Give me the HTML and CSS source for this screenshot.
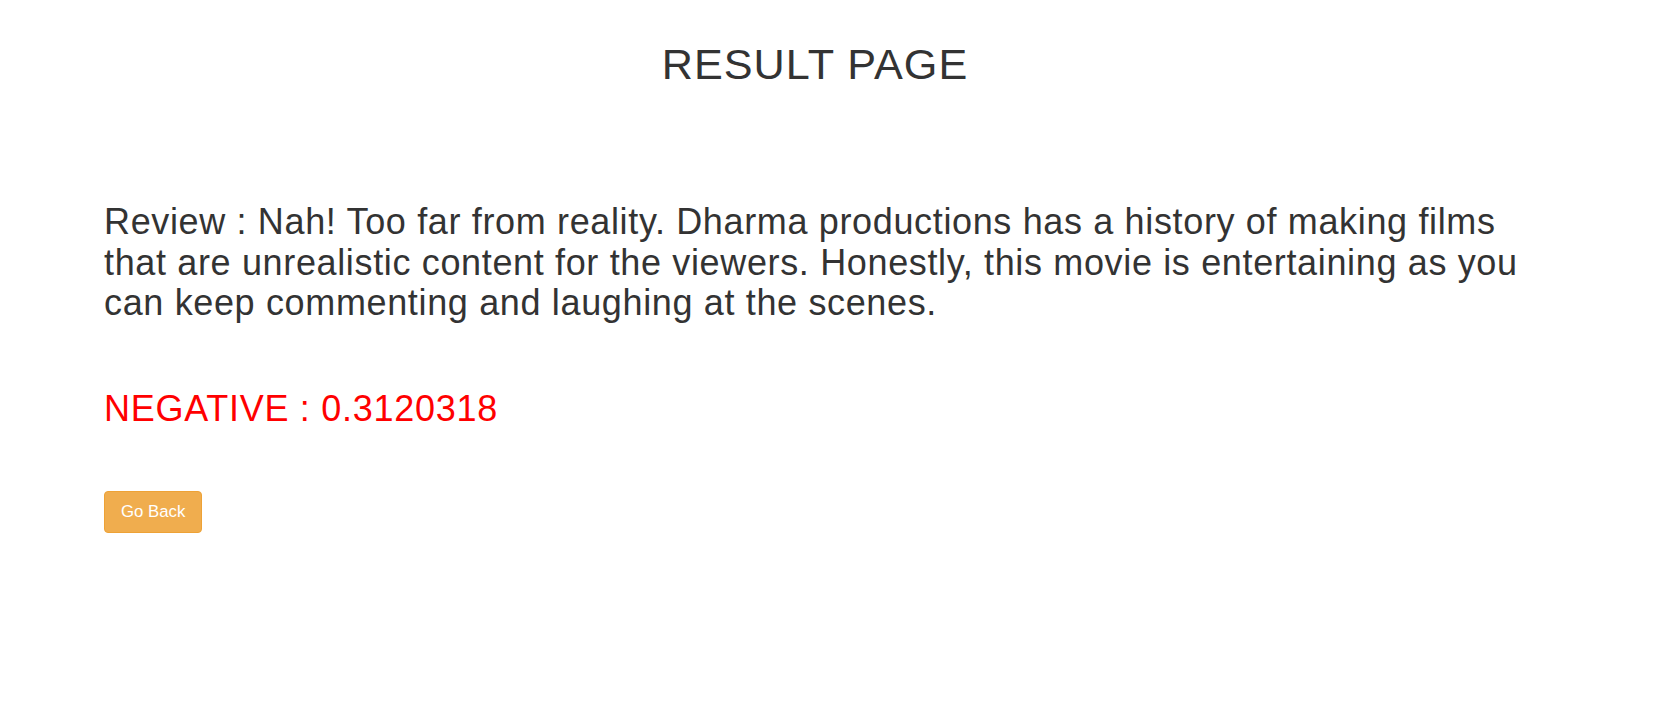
FILE: index.html
```html
<!DOCTYPE html>
<html lang="en">
<head>
<meta charset="utf-8">
<title>Result Page</title>
<link rel="stylesheet" href="styles.css">
</head>
<body>
<main class="page">
  <h1 class="title">RESULT PAGE</h1>
  <h2 class="review">Review : Nah! Too far from reality. Dharma productions has a history of making films that are unrealistic content for the viewers. Honestly, this movie is entertaining as you can keep commenting and laughing at the scenes.</h2>
  <h2 class="result">NEGATIVE : 0.3120318</h2>
  <div class="actions">
    <a class="btn-back" href="#">Go Back</a>
  </div>
</main>
</body>
</html>
```

FILE: styles.css
```css
html, body {
  margin: 0;
  padding: 0;
  background: #ffffff;
}

body {
  font-family: "Liberation Sans", Arial, Helvetica, sans-serif;
  color: #333333;
}

.page {
  margin-left: 104px;
  width: 1422px;
  display: flex;
  flex-direction: column;
}

.title {
  margin: 40.6px 0 0;
  font-size: 43.2px;
  line-height: 1.1;
  font-weight: 400;
  letter-spacing: 0.024em;
  text-align: center;
}

.review {
  margin: 114.2px 0 0;
  font-size: 36px;
  line-height: 40.5px;
  font-weight: 400;
  letter-spacing: 0.018em;
}

.result {
  margin: 65.2px 0 0;
  font-size: 36px;
  line-height: 40.5px;
  font-weight: 400;
  letter-spacing: 0.02em;
  color: #ff0000;
}

.actions {
  margin-top: 61.5px;
}

.btn-back {
  display: inline-block;
  padding: 8px 16px;
  font-size: 16.8px;
  line-height: 24px;
  color: #ffffff;
  background: #f0ad4e;
  border: 1px solid #eea236;
  border-radius: 4px;
  text-decoration: none;
}
```
